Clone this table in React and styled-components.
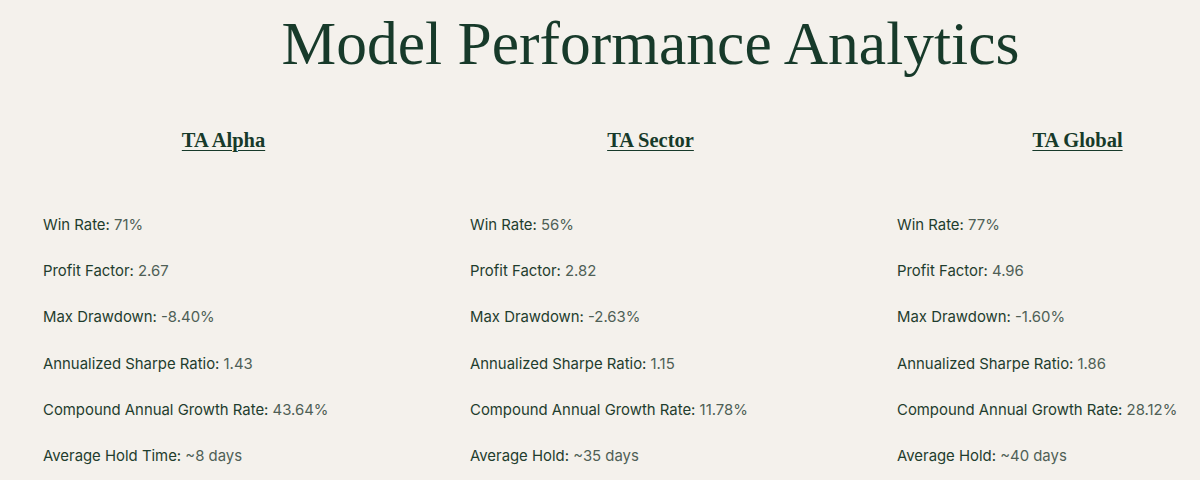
import styled, { createGlobalStyle } from 'styled-components'

const GlobalStyle = createGlobalStyle`
  body {
    margin: 0;
    background: #f4f1ec;
  }
`

const Viewport = styled.div`
  width: 100%;
  overflow: hidden;
`

const Page = styled.div`
  width: 1281px;
  margin-left: 10px;
  color: #173a2a;
`

const Title = styled.h1`
  margin: 0;
  padding-top: 5px;
  text-align: center;
  font-family: 'Liberation Serif', 'DejaVu Serif', serif;
  font-weight: 400;
  font-size: 61.5px;
  line-height: 76px;
  color: #173a2a;
`

const Columns = styled.div`
  display: grid;
  grid-template-columns: repeat(3, 1fr);
  margin-top: 45px;
`

const Column = styled.section`
  padding: 0 33px;
`

const ModelName = styled.h2`
  margin: 0;
  text-align: center;
  font-family: 'Liberation Serif', 'DejaVu Serif', serif;
  font-weight: 700;
  font-size: 20.5px;
  line-height: 28px;
  color: #173a2a;
  text-decoration: underline;
  text-underline-offset: 3px;
  text-decoration-thickness: 1px;
`

const Stats = styled.ul`
  list-style: none;
  margin: 62px 0 0;
  padding: 0;
  display: flex;
  flex-direction: column;
  gap: 28.2px;
`

const Stat = styled.li`
  font-family: Inter, 'Noto Sans', sans-serif;
  font-size: 14.9px;
  line-height: 18px;
  color: #1f3d2e;
`

const Value = styled.span`
  color: #4f5f56;
`

const models = [
  {
    name: 'TA Alpha',
    stats: [
      ['Win Rate', '71%'],
      ['Profit Factor', '2.67'],
      ['Max Drawdown', '-8.40%'],
      ['Annualized Sharpe Ratio', '1.43'],
      ['Compound Annual Growth Rate', '43.64%'],
      ['Average Hold Time', '~8 days'],
    ],
  },
  {
    name: 'TA Sector',
    stats: [
      ['Win Rate', '56%'],
      ['Profit Factor', '2.82'],
      ['Max Drawdown', '-2.63%'],
      ['Annualized Sharpe Ratio', '1.15'],
      ['Compound Annual Growth Rate', '11.78%'],
      ['Average Hold', '~35 days'],
    ],
  },
  {
    name: 'TA Global',
    stats: [
      ['Win Rate', '77%'],
      ['Profit Factor', '4.96'],
      ['Max Drawdown', '-1.60%'],
      ['Annualized Sharpe Ratio', '1.86'],
      ['Compound Annual Growth Rate', '28.12%'],
      ['Average Hold', '~40 days'],
    ],
  },
]

const App = () => {
  return (
    <>
      <GlobalStyle />
      <Viewport>
        <Page>
          <Title>Model Performance Analytics</Title>
          <Columns>
            {models.map((model) => (
              <Column key={model.name}>
                <ModelName>{model.name}</ModelName>
                <Stats>
                  {model.stats.map(([label, value]) => (
                    <Stat key={label}>
                      {label}: <Value>{value}</Value>
                    </Stat>
                  ))}
                </Stats>
              </Column>
            ))}
          </Columns>
        </Page>
      </Viewport>
    </>
  )
}

export default App
